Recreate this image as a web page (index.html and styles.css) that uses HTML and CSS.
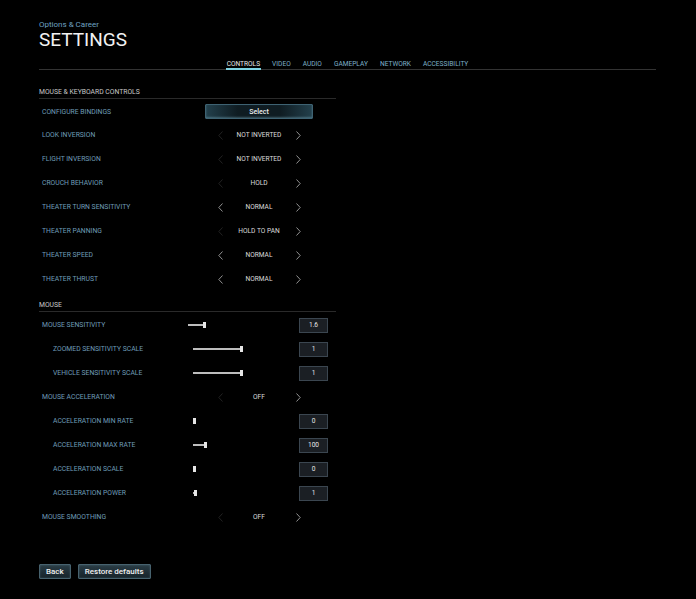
FILE: index.html
```html
<!DOCTYPE html>
<html>
<head>
    <meta charset="utf-8">
    <title>Settings</title>
    <link rel="stylesheet" href="styles.css">
</head>
<body>
    <div class="page">
        <div class="subtitle">Options &amp; Career</div>
        <h1 class="title">SETTINGS</h1>

        <div class="tabs">
            <span class="tab active">CONTROLS</span>
            <span class="tab">VIDEO</span>
            <span class="tab">AUDIO</span>
            <span class="tab">GAMEPLAY</span>
            <span class="tab">NETWORK</span>
            <span class="tab">ACCESSIBILITY</span>
        </div>

        <div class="panel">
            <div class="section">MOUSE &amp; KEYBOARD CONTROLS</div>

            <div class="row first">
                <span class="label">CONFIGURE BINDINGS</span>
                <button class="select">Select</button>
            </div>
            <div class="row">
                <span class="label">LOOK INVERSION</span>
                <div class="picker">
                    <svg class="chev dim" viewBox="0 0 5 9"><polyline points="4.5,0.5 0.8,4.5 4.5,8.5"/></svg>
                    <span class="value">NOT INVERTED</span>
                    <svg class="chev" viewBox="0 0 5 9"><polyline points="0.5,0.5 4.2,4.5 0.5,8.5"/></svg>
                </div>
            </div>
            <div class="row">
                <span class="label">FLIGHT INVERSION</span>
                <div class="picker">
                    <svg class="chev dim" viewBox="0 0 5 9"><polyline points="4.5,0.5 0.8,4.5 4.5,8.5"/></svg>
                    <span class="value">NOT INVERTED</span>
                    <svg class="chev" viewBox="0 0 5 9"><polyline points="0.5,0.5 4.2,4.5 0.5,8.5"/></svg>
                </div>
            </div>
            <div class="row">
                <span class="label">CROUCH BEHAVIOR</span>
                <div class="picker">
                    <svg class="chev dim" viewBox="0 0 5 9"><polyline points="4.5,0.5 0.8,4.5 4.5,8.5"/></svg>
                    <span class="value">HOLD</span>
                    <svg class="chev" viewBox="0 0 5 9"><polyline points="0.5,0.5 4.2,4.5 0.5,8.5"/></svg>
                </div>
            </div>
            <div class="row">
                <span class="label">THEATER TURN SENSITIVITY</span>
                <div class="picker">
                    <svg class="chev" viewBox="0 0 5 9"><polyline points="4.5,0.5 0.8,4.5 4.5,8.5"/></svg>
                    <span class="value">NORMAL</span>
                    <svg class="chev" viewBox="0 0 5 9"><polyline points="0.5,0.5 4.2,4.5 0.5,8.5"/></svg>
                </div>
            </div>
            <div class="row">
                <span class="label">THEATER PANNING</span>
                <div class="picker">
                    <svg class="chev dim" viewBox="0 0 5 9"><polyline points="4.5,0.5 0.8,4.5 4.5,8.5"/></svg>
                    <span class="value">HOLD TO PAN</span>
                    <svg class="chev" viewBox="0 0 5 9"><polyline points="0.5,0.5 4.2,4.5 0.5,8.5"/></svg>
                </div>
            </div>
            <div class="row">
                <span class="label">THEATER SPEED</span>
                <div class="picker">
                    <svg class="chev" viewBox="0 0 5 9"><polyline points="4.5,0.5 0.8,4.5 4.5,8.5"/></svg>
                    <span class="value">NORMAL</span>
                    <svg class="chev" viewBox="0 0 5 9"><polyline points="0.5,0.5 4.2,4.5 0.5,8.5"/></svg>
                </div>
            </div>
            <div class="row">
                <span class="label">THEATER THRUST</span>
                <div class="picker">
                    <svg class="chev" viewBox="0 0 5 9"><polyline points="4.5,0.5 0.8,4.5 4.5,8.5"/></svg>
                    <span class="value">NORMAL</span>
                    <svg class="chev" viewBox="0 0 5 9"><polyline points="0.5,0.5 4.2,4.5 0.5,8.5"/></svg>
                </div>
            </div>

            <div class="section second">MOUSE</div>

            <div class="row slider-row">
                <span class="label">MOUSE SENSITIVITY</span>
                <div class="slider"><span class="track" style="width:15px"></span><span class="thumb"></span></div>
                <span class="box">1.6</span>
            </div>
            <div class="row slider-row sub">
                <span class="label">ZOOMED SENSITIVITY SCALE</span>
                <div class="slider"><span class="track" style="width:47px"></span><span class="thumb"></span></div>
                <span class="box">1</span>
            </div>
            <div class="row slider-row sub">
                <span class="label">VEHICLE SENSITIVITY SCALE</span>
                <div class="slider"><span class="track" style="width:47px"></span><span class="thumb"></span></div>
                <span class="box">1</span>
            </div>
            <div class="row">
                <span class="label">MOUSE ACCELERATION</span>
                <div class="picker">
                    <svg class="chev dim" viewBox="0 0 5 9"><polyline points="4.5,0.5 0.8,4.5 4.5,8.5"/></svg>
                    <span class="value">OFF</span>
                    <svg class="chev" viewBox="0 0 5 9"><polyline points="0.5,0.5 4.2,4.5 0.5,8.5"/></svg>
                </div>
            </div>
            <div class="row slider-row sub">
                <span class="label">ACCELERATION MIN RATE</span>
                <div class="slider"><span class="track" style="width:0px"></span><span class="thumb"></span></div>
                <span class="box">0</span>
            </div>
            <div class="row slider-row sub">
                <span class="label">ACCELERATION MAX RATE</span>
                <div class="slider"><span class="track" style="width:11px"></span><span class="thumb"></span></div>
                <span class="box">100</span>
            </div>
            <div class="row slider-row sub">
                <span class="label">ACCELERATION SCALE</span>
                <div class="slider"><span class="track" style="width:0px"></span><span class="thumb"></span></div>
                <span class="box">0</span>
            </div>
            <div class="row slider-row sub">
                <span class="label">ACCELERATION POWER</span>
                <div class="slider"><span class="track" style="width:1px"></span><span class="thumb"></span></div>
                <span class="box">1</span>
            </div>
            <div class="row">
                <span class="label">MOUSE SMOOTHING</span>
                <div class="picker">
                    <svg class="chev dim" viewBox="0 0 5 9"><polyline points="4.5,0.5 0.8,4.5 4.5,8.5"/></svg>
                    <span class="value">OFF</span>
                    <svg class="chev" viewBox="0 0 5 9"><polyline points="0.5,0.5 4.2,4.5 0.5,8.5"/></svg>
                </div>
            </div>
        </div>

        <div class="footer">
            <button class="btn">Back</button>
            <button class="btn">Restore defaults</button>
        </div>
    </div>
</body>
</html>
```

FILE: styles.css
```css
html, body {
    background: #000;
    font-family: Roboto, "Noto Sans", sans-serif;
}

body {
    margin: 0;
    padding: 0;
}

.page {
    padding: 20px 0 0 39px;
    width: 617px;
}

.subtitle {
    font-size: 8px;
    line-height: 10px;
    color: #6fa2c2;
}

.title {
    margin: 0;
    font-size: 19px;
    font-weight: 400;
    line-height: 20px;
    color: #f2f2f2;
}

/* tab bar */
.tabs {
    display: flex;
    justify-content: center;
    gap: 10px;
    margin-top: 7px;
    border-bottom: 1px solid #333;
}

.tab {
    font-size: 6.6px;
    line-height: 8px;
    color: #7fb0c9;
    padding: 3px 1px 0 1px;
    margin-bottom: -1px;
    border-bottom: 2px solid transparent;
}

.tab.active {
    color: #e8e8e8;
    border-bottom-color: #7fd3e2;
}

/* settings list */
.panel {
    width: 297px;
    margin-top: 17px;
}

.section {
    font-size: 6.8px;
    line-height: 11px;
    color: #c9c9c9;
    border-bottom: 1px solid #2a2a2a;
    margin-bottom: 1px;
}

.section.second {
    margin-top: 9px;
}

.row {
    display: grid;
    grid-template-columns: 166px 108px;
    align-items: center;
    height: 24px;
}

.row.first {
    height: 23px;
}

.label {
    padding-left: 3px;
    font-size: 6.8px;
    color: #6f9db8;
    white-space: nowrap;
}

.sub .label {
    padding-left: 14px;
}

.select {
    height: 15px;
    padding: 0;
    border: 1px solid #3e6272;
    border-radius: 1px;
    background: linear-gradient(to right, #23404c, #0f1c22 30%, #0f1c22 70%, #23404c);
    box-shadow: inset 0 -1px 2px rgba(140, 200, 220, 0.35);
    color: #f0f0f0;
    font-family: Roboto, sans-serif;
    font-size: 7px;
    font-weight: 500;
}

.picker {
    display: grid;
    grid-template-columns: 30px 1fr 30px;
    align-items: center;
    justify-items: center;
}

.chev {
    width: 5px;
    height: 9px;
    fill: none;
    stroke: #b5b5b5;
    stroke-width: 0.8;
}

.chev.dim {
    stroke: #2b2b2b;
}

.value {
    font-size: 6.6px;
    color: #dcdcdc;
    white-space: nowrap;
}

.slider-row {
    grid-template-columns: 149px 1fr 29px;
    padding-right: 8px;
}

.slider-row.sub {
    grid-template-columns: 154px 1fr 29px;
}

.slider {
    display: flex;
    align-items: center;
}

.track {
    height: 1.5px;
    background: #bdbdbd;
}

.thumb {
    width: 2.5px;
    height: 6px;
    background: #e6e6e6;
}

.box {
    height: 13px;
    border: 1px solid #3b4650;
    background: #1b1f24;
    color: #e8e8e8;
    font-size: 6.6px;
    line-height: 13px;
    text-align: center;
}

/* bottom buttons */
.footer {
    display: flex;
    gap: 7px;
    margin-top: 35px;
}

.btn {
    height: 15px;
    padding: 0 6px;
    border: 1px solid #47626e;
    border-radius: 1px;
    background: linear-gradient(#2a3c45, #16232a);
    box-shadow: inset 0 0 2px rgba(150, 200, 220, 0.3);
    color: #f0f0f0;
    font-family: Roboto, sans-serif;
    font-size: 8px;
    font-weight: 500;
}
```
